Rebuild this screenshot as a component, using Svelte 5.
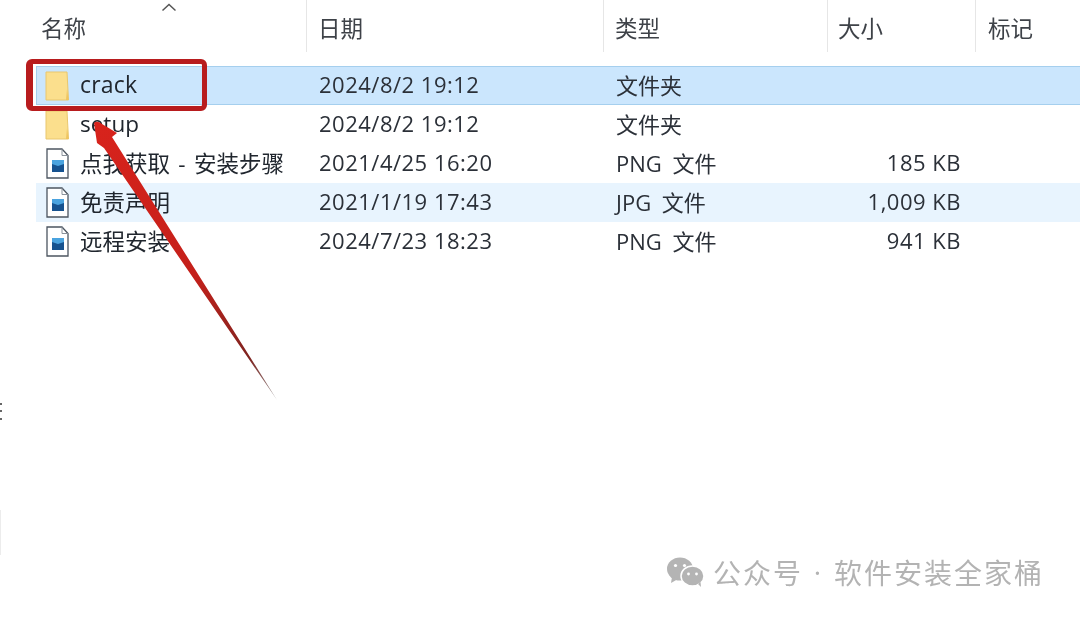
<script>
  const columns = [
    { label: '名称', cls: 'name' },
    { label: '日期', cls: 'date' },
    { label: '类型', cls: 'type' },
    { label: '大小', cls: 'size' },
    { label: '标记', cls: 'tag' }
  ];
  const rows = [
    { name: 'crack', date: '2024/8/2 19:12', type: '文件夹', size: '', icon: 'folder', state: 'selected' },
    { name: 'setup', date: '2024/8/2 19:12', type: '文件夹', size: '', icon: 'folder', state: '' },
    { name: '点我获取 - 安装步骤', date: '2021/4/25 16:20', type: 'PNG 文件', size: '185 KB', icon: 'image', state: '' },
    { name: '免责声明', date: '2021/1/19 17:43', type: 'JPG 文件', size: '1,009 KB', icon: 'image', state: 'hover' },
    { name: '远程安装', date: '2024/7/23 18:23', type: 'PNG 文件', size: '941 KB', icon: 'image', state: '' }
  ];
</script>

<main class="page">
  <div class="soft">
    <header class="head">
      <svg class="sort" width="16" height="9" viewBox="0 0 16 9"><path d="M1.5 7.5 8 1.5l6.500 6" fill="none" stroke="#555" stroke-width="1.500"/></svg>
      {#each columns as c}
        <div class="hcell {c.cls}"><span>{c.label}</span></div>
      {/each}
    </header>

    <section class="list">
      {#each rows as r}
        <div class="row {r.state}">
          <div class="cell name">
            {#if r.icon === 'folder'}
              <svg class="ico" width="26" height="32" viewBox="0 0 26 32">
                <path d="M1 2h21l1.500 28H1z" fill="#fbdf8d" stroke="#e9c76e" stroke-width="1"/>
                <path d="M21 30l1-11 1.500 11z" fill="#efc560"/>
              </svg>
            {:else}
              <svg class="ico" width="26" height="32" viewBox="0 0 26 32">
                <path d="M2 1h15l6 6.500V30H2z" fill="#fff" stroke="#4c5560" stroke-width="1.300"/>
                <path d="M17 1v6.500h6" fill="none" stroke="#8a929b" stroke-width="1"/>
                <rect x="7" y="12" width="12" height="12" fill="#16528f"/>
                <path d="M7 12h12v4l-6 2-6-2z" fill="#4aa3df"/>
              </svg>
            {/if}
            <span class="label">{r.name}</span>
          </div>
          <div class="cell date">{r.date}</div>
          <div class="cell type">{r.type}</div>
          <div class="cell size">{r.size}</div>
        </div>
      {/each}
    </section>
  </div>

  <svg class="arrow" width="1080" height="617" viewBox="0 0 1080 617">
    <defs>
      <linearGradient id="shaft" x1="96" y1="122" x2="277" y2="400" gradientUnits="userSpaceOnUse">
        <stop offset="0" stop-color="#d8231c"/>
        <stop offset=".55" stop-color="#c4201a"/>
        <stop offset=".85" stop-color="#7e2420"/>
        <stop offset="1" stop-color="#9a9a9a"/>
      </linearGradient>
    </defs>
    <path d="M94 123 Q97 120 102 124 L117 133 L112 137 L277 400 L104 148 L97 143 Z" fill="url(#shaft)"/>
    <g fill="#666">
      <rect x="0" y="403" width="2" height="2"/>
      <rect x="0" y="410" width="2" height="2"/>
      <rect x="0" y="418" width="2" height="2"/>
    </g>
    <rect x="0" y="510" width="1" height="45" fill="#ececec"/>
  </svg>
  <div class="mark"></div>

  <footer class="water">
    <svg width="40" height="32" viewBox="0 0 40 32">
      <ellipse cx="14" cy="13" rx="13" ry="11.500" fill="#b4b4b4"/>
      <path d="M6 21l-1 6 7-4z" fill="#b4b4b4"/>
      <ellipse cx="26.500" cy="20" rx="11.500" ry="10" fill="#b4b4b4" stroke="#fff" stroke-width="1.500"/>
      <path d="M32 28l3 3-.5-5z" fill="#b4b4b4"/>
      <circle cx="9.500" cy="9.500" r="1.600" fill="#fff"/><circle cx="18.500" cy="9.500" r="1.600" fill="#fff"/>
      <circle cx="22.500" cy="18" r="1.400" fill="#fff"/><circle cx="30.500" cy="18" r="1.400" fill="#fff"/>
    </svg>
    <span>公众号</span><span class="dot">·</span><span>软件安装全家桶</span>
  </footer>
</main>

<style>
  :global(body) { margin: 0; background: #fff; }
  .page {
    position: relative;
    width: 1080px;
    height: 617px;
    overflow: hidden;
    background: #fff;
    font-family: "Open Sans", "Noto Sans CJK SC", sans-serif;
    font-size: 22px;
    color: #2b3038;
  }
  .soft { filter: blur(0.45px); }
  .head {
    position: relative;
    display: grid;
    grid-template-columns: 307px 297px 224px 148px 104px;
    height: 66px;
    box-sizing: border-box;
    color: #3e4248;
  }
  .sort { position: absolute; left: 161px; top: 3px; }
  .hcell {
    height: 52px;
    display: flex;
    align-items: center;
    padding-top: 2px;
    box-sizing: border-box;
    border-right: 1px solid #e6e6e6;
    font-size: 22.5px;
  }
  .hcell.name { padding-left: 41px; }
  .hcell.date { padding-left: 11px; }
  .hcell.type { padding-left: 11px; }
  .hcell.size { padding-left: 10px; }
  .hcell.tag { padding-left: 12px; border-right: 0; }
  .list { margin-left: 36px; }
  .row {
    display: grid;
    grid-template-columns: 270px 297px 224px 134px;
    height: 39px;
    box-sizing: border-box;
    align-items: center;
  }
  .row.selected {
    background: #cbe6fd;
    box-shadow: inset 0 1px 0 #a5cfee, inset 0 -1px 0 #a5cfee, inset 1px 0 0 #a5cfee;
  }
  .row.hover { background: #e8f4fe; }
  .cell { white-space: nowrap; padding-bottom: 4px; }
  .cell.name { display: flex; align-items: center; gap: 9px; padding-left: 9px; padding-bottom: 0; }
  .label { color: #20262e; word-spacing: 2.5px; padding-bottom: 3px; font-size: 22.5px; }
  .cell.date { padding-left: 13px; letter-spacing: .5px; }
  .cell.type { padding-left: 13px; word-spacing: 5px; }
  .cell.size { text-align: right; letter-spacing: .5px; }
  .ico { flex: none; }
  .selected .label { font-size: 23px; letter-spacing: .2px; padding-bottom: 4px; }
  .mark {
    position: absolute;
    left: 26px;
    top: 59px;
    width: 181px;
    height: 52px;
    box-sizing: border-box;
    border: 5px solid #b81c1e;
    border-left-width: 7px;
    border-radius: 6px;
  }
  .arrow { position: absolute; left: 0; top: 0; }
  .water {
    position: absolute;
    left: 666px;
    top: 552px;
    display: flex;
    align-items: center;
    gap: 7px;
    color: #b3b3b3;
    font-family: "Noto Sans CJK SC", sans-serif;
    font-size: 28px;
    letter-spacing: 2px;
    filter: blur(0.4px);
  }
  .dot { width: 15px; margin-right: 2px; text-align: center; letter-spacing: 0; font-family: "Open Sans", sans-serif; }
</style>
